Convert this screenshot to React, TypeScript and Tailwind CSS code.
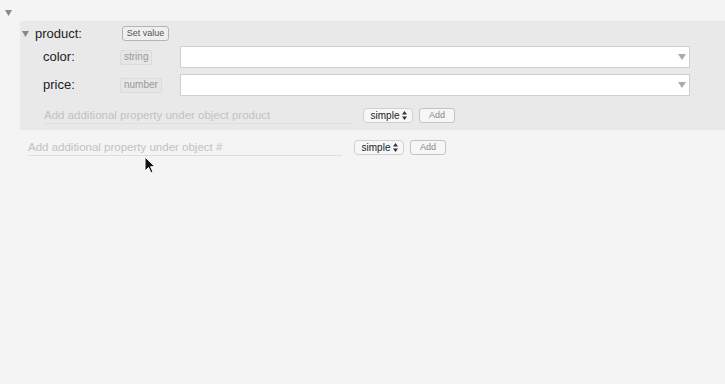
import React from "react";

const Tri = ({ className = "" }: { className?: string }) => (
  <svg width="7" height="6" viewBox="0 0 7 6" className={className}>
    <path d="M0 0 L7 0 L3.5 6 Z" fill="#888" />
  </svg>
);

const UpDown = () => (
  <svg width="5" height="9" viewBox="0 0 5 9" className="ml-[3px]">
    <path d="M0 3.5 L5 3.5 L2.5 0 Z" fill="#333" />
    <path d="M0 5.5 L5 5.5 L2.5 9 Z" fill="#333" />
  </svg>
);

const Badge = ({ children }: { children: React.ReactNode }) => (
  <span className="h-[15px] px-[3px] flex items-center rounded-[2px] border border-[#dcdcdc] bg-[#e6e6e6] text-[10px] leading-none text-[#999]">
    {children}
  </span>
);

const ValueInput = () => (
  <div className="w-[510px] h-[22px] bg-white border border-[#cfcfcf] flex items-center justify-end pr-[3px]">
    <svg width="8" height="6" viewBox="0 0 8 6">
      <path d="M0 0 L8 0 L4 6 Z" fill="#aaa" />
    </svg>
  </div>
);

const AddRow = ({ label, inputWidth, gap }: { label: string; inputWidth: string; gap: string }) => (
  <div className="flex items-center h-[15px]">
    <div className={`${inputWidth} h-[15px] mt-[1px] border-b border-[#dedede] text-[11.5px] leading-none text-[#c2c2c2] flex items-center`}>
      {label}
    </div>
    <div className={`${gap} h-[15px] w-[50px] rounded-[4px] border border-[#d0d0d0] bg-[#f7f7f7] flex items-center justify-center pl-[2px] text-[10px] text-[#222]`}>
      simple
      <UpDown />
    </div>
    <div className="ml-[6px] h-[15px] w-[36px] rounded-[3px] border border-[#c4c4c4] bg-[#f6f6f6] flex items-center justify-center text-[9px] text-[#888]">
      Add
    </div>
  </div>
);

export default function App() {
  return (
    <div className="relative min-h-[384px] bg-[#f4f4f4] font-['Liberation_Sans',Arial,sans-serif] text-[#222]">
      <div className="h-[21px] pl-[5px] pt-[10px]">
        <Tri />
      </div>

      <div className="ml-[20px] bg-[#e9e9e9] pt-[5px] pb-[7px]">
        <div className="flex items-center h-[15px]">
          <Tri className="ml-[2px]" />
          <span className="ml-[6px] w-[87px] text-[13px]">product:</span>
          <span className="h-[15px] w-[47px] rounded-[3px] border border-[#b4b4b4] bg-[#efefef] flex items-center justify-center text-[9px] text-[#555]">
            Set value
          </span>
        </div>

        <div className="flex items-center h-[22px] mt-[5px]">
          <span className="ml-[23px] w-[77px] text-[13px]">color:</span>
          <div className="w-[60px] flex">
            <Badge>string</Badge>
          </div>
          <ValueInput />
        </div>

        <div className="flex items-center h-[22px] mt-[6px]">
          <span className="ml-[23px] w-[77px] text-[13px]">price:</span>
          <div className="w-[60px] flex">
            <Badge>number</Badge>
          </div>
          <ValueInput />
        </div>

        <div className="mt-[12px] ml-[24px]">
          <AddRow label="Add additional property under object product" inputWidth="w-[308px]" gap="ml-[11px]" />
        </div>
      </div>

      <div className="mt-[10px] ml-[28px]">
        <AddRow label="Add additional property under object #" inputWidth="w-[314px]" gap="ml-[12px]" />
      </div>

      <svg width="12" height="19" viewBox="0 0 12 19" className="absolute left-[144px] top-[156px]">
        <path d="M1 1 L1 15 L4.5 11.5 L7 17 L9 16 L6.6 10.7 L11 10.7 Z" fill="#111" stroke="#fff" strokeWidth="1" strokeLinejoin="round" />
      </svg>
    </div>
  );
}
